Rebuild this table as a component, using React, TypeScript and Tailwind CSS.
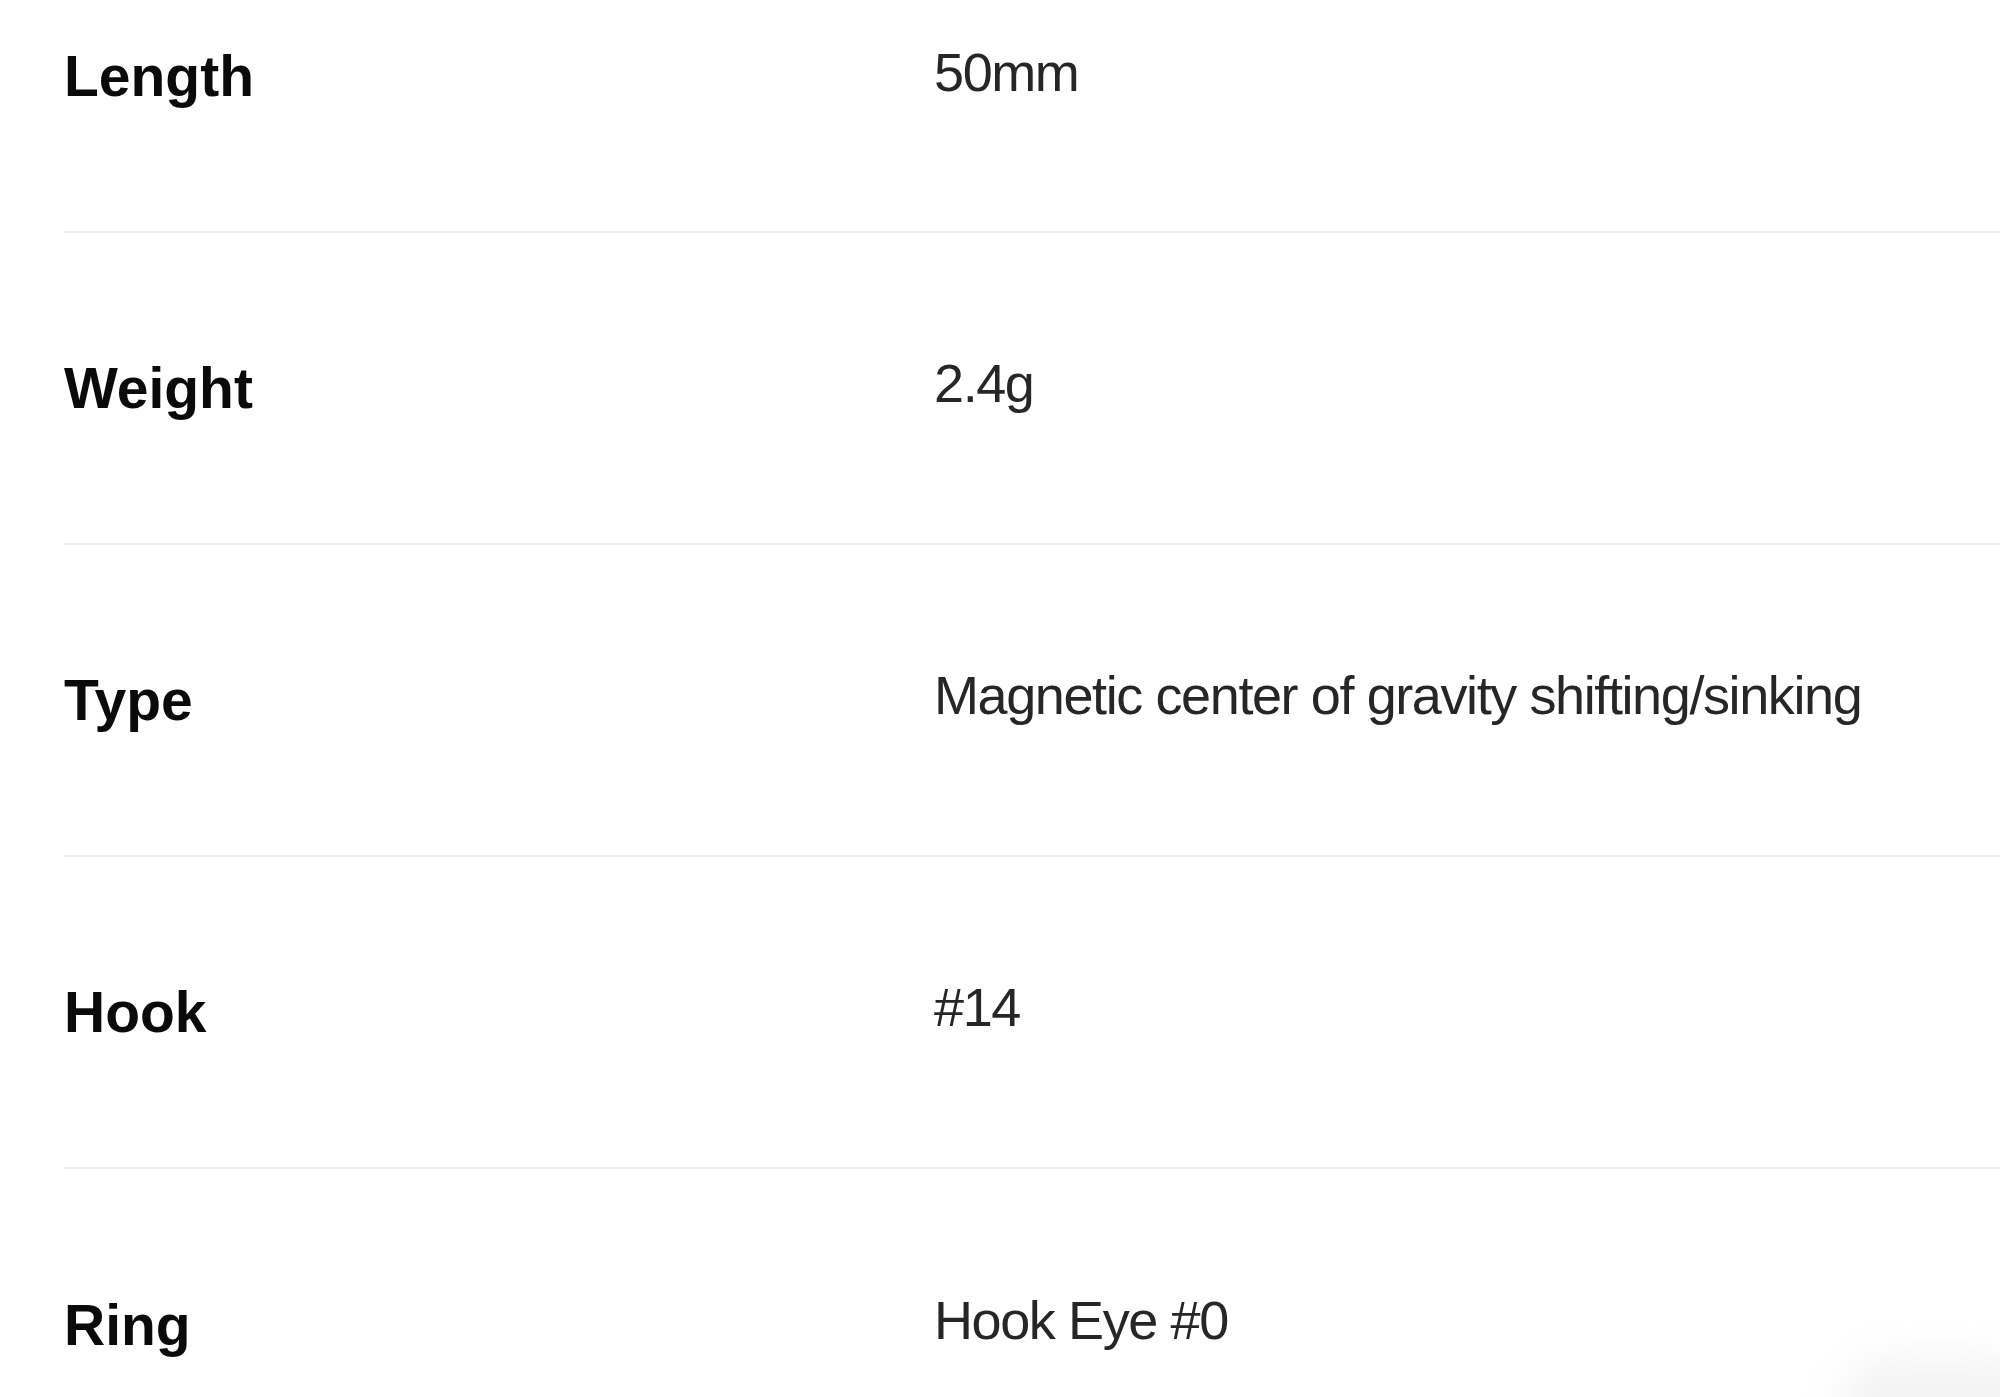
import React from "react";

const rows: { label: string; value: string }[] = [
  { label: "Length", value: "50mm" },
  { label: "Weight", value: "2.4g" },
  { label: "Type", value: "Magnetic center of gravity shifting/sinking" },
  { label: "Hook", value: "#14" },
  { label: "Ring", value: "Hook Eye #0" },
];

export default function App() {
  return (
    <div className="w-[2000px] h-[1397px] overflow-hidden bg-white relative">
      <div className="pl-[64px]">
        {rows.map((r, i) => (
          <div
            key={r.label}
            className={
              i === 0
                ? "flex items-center h-[233px] pb-[78px] border-b-2 border-[#ebebeb]"
                : i === rows.length - 1
                ? "flex items-center h-[312px]"
                : "flex items-center h-[312px] border-b-2 border-[#ebebeb]"
            }
          >
            <div className="w-[870px] shrink-0 font-['Liberation_Sans',Arial,sans-serif] font-bold text-[57px] leading-none text-[#0a0a0a]">
              {r.label}
            </div>
            <div className="font-['Liberation_Sans',Arial,sans-serif] text-[54px] leading-none tracking-[-1.4px] text-[#262626] -mt-[10px]">
              {r.value}
            </div>
          </div>
        ))}
      </div>
      <div className="absolute right-[-40px] bottom-[-60px] w-[200px] h-[100px] rounded-full bg-[#ececec] blur-[18px] opacity-60" />
    </div>
  );
}
